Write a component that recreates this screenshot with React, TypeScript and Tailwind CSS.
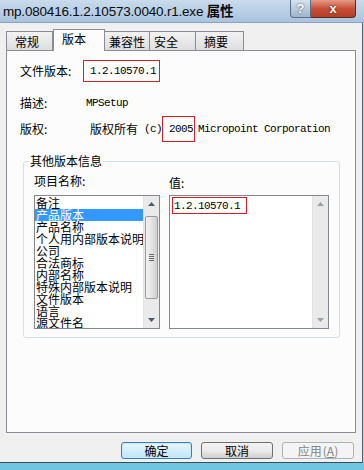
import React from "react";

const cjk = "font-['Noto_Sans_CJK_SC','Noto_Sans',sans-serif]";
const mono = "font-['Liberation_Mono','Noto_Sans_CJK_SC',monospace] text-[11px] tracking-[-0.6px]";

const items = [
  "备注",
  "产品版本",
  "产品名称",
  "个人用内部版本说明",
  "公司",
  "合法商标",
  "内部名称",
  "特殊内部版本说明",
  "文件版本",
  "语言",
  "源文件名",
];

const Arrow = ({ up, dim }: { up?: boolean; dim?: boolean }) => (
  <div className="h-[16px] flex items-center justify-center">
    <svg width="7" height="4" viewBox="0 0 7 4">
      <path
        d={up ? "M0 4 L3.5 0 L7 4 Z" : "M0 0 L3.5 4 L7 0 Z"}
        fill={dim ? "#9aa0a6" : "#4d5a66"}
      />
    </svg>
  </div>
);

const ScrollBar = ({ thumb }: { thumb?: boolean }) => (
  <div className="w-[16px] h-full flex flex-col bg-[#eaeaea] border-l border-[#e2e2e2]">
    <Arrow up dim={!thumb} />
    <div className="flex-1 flex flex-col px-[1px]">
      {thumb && (
        <div className="mt-[4px] h-[83px] rounded-[2px] border border-[#9b9b9b] bg-gradient-to-r from-[#f2f2f2] via-[#e4e4e4] to-[#cfcfcf] flex items-center justify-center">
          <div className="flex flex-col gap-[1px]">
            <div className="w-[5px] h-[1px] bg-[#6a6a6a]" />
            <div className="w-[5px] h-[1px] bg-[#6a6a6a]" />
            <div className="w-[5px] h-[1px] bg-[#6a6a6a]" />
            <div className="w-[5px] h-[1px] bg-[#6a6a6a]" />
          </div>
        </div>
      )}
    </div>
    <Arrow dim={!thumb} />
  </div>
);

const tabs = [
  { label: "常规", w: "w-[47px]", pl: "pl-[8px]" },
  { label: "版本", w: "w-[52px]", pl: "pl-[8px]", active: true },
  { label: "兼容性", w: "w-[46px]", pl: "pl-[4px]" },
  { label: "安全", w: "w-[47px]", pl: "pl-[4px]" },
  { label: "摘要", w: "w-[49px]", pl: "pl-[8px]" },
];

export default function App() {
  return (
    <div className={`w-[364px] h-[470px] flex flex-col bg-[#6ec6e0] overflow-hidden text-black ${cjk}`}>
      {/* title bar */}
      <div className="h-[23px] flex items-start bg-gradient-to-b from-[#c9dbec] via-[#b9cfe5] to-[#a9c3de] border-b border-[#8aa3bc]">
        <div className="pl-[3px] pt-[4px] text-[13.5px] leading-[16px] font-['Liberation_Sans','Noto_Sans_CJK_SC',sans-serif] text-[#0a0a0a] tracking-[-0.2px] flex-1">
          mp.080416.1.2.10573.0040.r1.exe <span className="font-bold">属性</span>
        </div>
        <div className="flex mr-[8px]">
          <div className="w-[21px] h-[18px] rounded-bl-[4px] border border-[#5a6f86] border-t-0 bg-gradient-to-b from-[#d6e2ee] to-[#9fb5cc] flex items-center justify-center text-white text-[13px] font-bold font-['Liberation_Sans',sans-serif] [text-shadow:0_0_2px_#2a3b4e]">
            ?
          </div>
          <div className="w-[45px] h-[18px] rounded-br-[4px] border border-[#5b2a22] border-t-0 border-l-0 bg-gradient-to-b from-[#e59a87] via-[#c7503a] to-[#b53e26] flex items-center justify-center text-white text-[13px] font-bold font-['Liberation_Sans',sans-serif] [text-shadow:0_0_2px_#3b1208]">
            x
          </div>
        </div>
      </div>

      <div className="flex h-[440px]">
        <div className="w-[362px] h-full bg-[#f0f0f0] border-b border-[#3d4c5c] flex flex-col">
          {/* tabs */}
          <div className="pl-[6px] pt-[6px] flex items-end h-[27px] text-[12px] leading-[14px]">
            {tabs.map((t) =>
              t.active ? (
                <div
                  key={t.label}
                  className={`${t.w} ${t.pl} h-[22px] -mb-[1px] pt-[2px] bg-[#fcfcfc] border border-b-0 border-[#898c95] relative z-10`}
                >
                  {t.label}
                </div>
              ) : (
                <div
                  key={t.label}
                  className={`${t.w} ${t.pl} h-[19px] pt-[3px] bg-gradient-to-b from-[#f2f2f2] to-[#dedede] border border-b-0 border-[#898c95] -ml-[1px] first:ml-0`}
                >
                  {t.label}
                </div>
              )
            )}
          </div>

          {/* panel */}
          <div className="mx-[6px] h-[383px] bg-[#fcfcfc] border border-[#898c95] flex flex-col text-[12px] leading-[14px]">
            <div className="mt-[9px] pl-[13px] flex items-center h-[22px]">
              <div className="w-[63px]">文件版本:</div>
              <div className={`h-[22px] w-[77px] border border-[#d0202a] pl-[6px] flex items-center ${mono}`}>1.2.10570.1</div>
            </div>
            <div className="mt-[13px] pl-[13px] flex items-center h-[16px]">
              <div className="w-[63px]">描述:</div>
              <div className={`ml-[3px] ${mono}`}>MPSetup</div>
            </div>
            <div className="mt-[5px] pl-[13px] flex items-center h-[26px]">
              <div className="w-[63px]">版权:</div>
              <div className="ml-[7px] flex items-center">
                <span>版权所有</span>
                <span className={`ml-[6px] ${mono}`}>(c)</span>
                <span className={`h-[26px] w-[33px] border border-[#d0202a] pl-[6px] flex items-center ${mono}`}>2005</span>
                <span className={`ml-[3px] ${mono}`}>Micropoint Corporation</span>
              </div>
            </div>

            <fieldset className="mt-[12px] ml-[16px] w-[316px] border border-[#d5dfe5] rounded-[3px] px-[10px] pb-[8px]">
              <legend className="px-[1px] -ml-[5px] leading-[14px]">其他版本信息</legend>
              <div className="flex gap-[9px] mt-[6px]">
                <div className="flex flex-col">
                  <div className="h-[14px]">项目名称:</div>
                  <div className="mt-[7px] w-[126px] h-[134px] border border-[#828790] bg-white flex">
                    <div className="flex-1 overflow-hidden pt-[1px] leading-[12px]">
                      {items.map((it, i) => (
                        <div
                          key={it}
                          className={`h-[12px] pl-[1px] whitespace-nowrap ${
                            i === 1 ? "bg-[#3399ff] text-white" : ""
                          }`}
                        >
                          {it}
                        </div>
                      ))}
                    </div>
                    <ScrollBar thumb />
                  </div>
                </div>
                <div className="flex flex-col">
                  <div className="h-[14px] pt-[2px]">值:</div>
                  <div className="mt-[7px] w-[160px] h-[134px] border border-[#828790] bg-white flex">
                    <div className="flex-1 pt-[1px] pl-[2px]">
                      <div className={`h-[17px] w-[75px] border border-[#d0202a] flex items-center pl-[1px] ${mono}`}>1.2.10570.1</div>
                    </div>
                    <ScrollBar />
                  </div>
                </div>
              </div>
            </fieldset>
          </div>

          {/* buttons */}
          <div className="mt-[9px] pr-[8px] flex justify-end gap-[9px] text-[12px] leading-[14px]">
            <button className="w-[71px] h-[17px] rounded-[3px] border border-[#3c7fb1] bg-gradient-to-b from-[#eaf6fd] to-[#bee6fd] shadow-[inset_0_0_0_1px_#c5e8fb] flex items-center justify-center">
              确定
            </button>
            <button className="w-[72px] h-[17px] rounded-[3px] border border-[#707070] bg-gradient-to-b from-[#f2f2f2] via-[#ebebeb] to-[#cfcfcf] flex items-center justify-center">
              取消
            </button>
            <button className="w-[72px] h-[17px] rounded-[3px] border border-[#adb2b5] bg-[#f4f4f4] text-[#838383] flex items-center justify-center">
              应用<span className="ml-[1px]">(<span className="underline">A</span>)</span>
            </button>
          </div>
        </div>
        <div className="w-[2px] h-full border-l border-[#4f5f70] bg-[#bcd6ec]" />
      </div>
    </div>
  );
}
